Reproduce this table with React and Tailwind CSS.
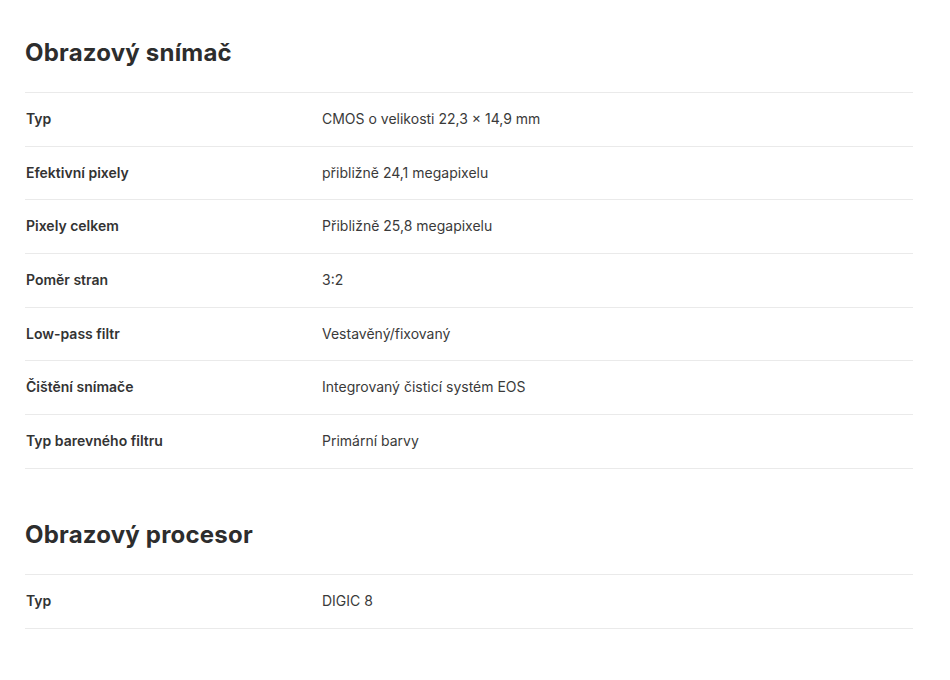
export default function App() {
  const sections = [
    {
      title: "Obrazový snímač",
      rows: [
        ["Typ", "CMOS o velikosti 22,3 × 14,9 mm"],
        ["Efektivní pixely", "přibližně 24,1 megapixelu"],
        ["Pixely celkem", "Přibližně 25,8 megapixelu"],
        ["Poměr stran", "3:2"],
        ["Low-pass filtr", "Vestavěný/fixovaný"],
        ["Čištění snímače", "Integrovaný čisticí systém EOS"],
        ["Typ barevného filtru", "Primární barvy"],
      ],
    },
    {
      title: "Obrazový procesor",
      rows: [["Typ", "DIGIC 8"]],
    },
  ];
  return (
    <div className="min-h-[680px] bg-white pl-[25px] pr-[37px] pt-[36px] text-[#333]" style={{ fontFamily: "Inter, 'Noto Sans', sans-serif" }}>
      {sections.map((s, i) => (
        <section key={i} className={i > 0 ? "mt-[49px]" : ""}>
          <h2 className="h-[34px] text-[24px] font-bold leading-[34px] text-[#2d2d2d] tracking-[0.2px]">{s.title}</h2>
          <div className="mt-[22px] border-t border-[#eaeaea]">
            {s.rows.map(([k, v], j) => (
              <div key={j} className="grid h-[53.7px] grid-cols-[297px_1fr] items-center border-b border-[#eaeaea] pb-[2px] text-[14px]">
                <div className="pl-px font-semibold text-[#333]">{k}</div>
                <div className="text-[#3a3a3a]">{v}</div>
              </div>
            ))}
          </div>
        </section>
      ))}
    </div>
  );
}
